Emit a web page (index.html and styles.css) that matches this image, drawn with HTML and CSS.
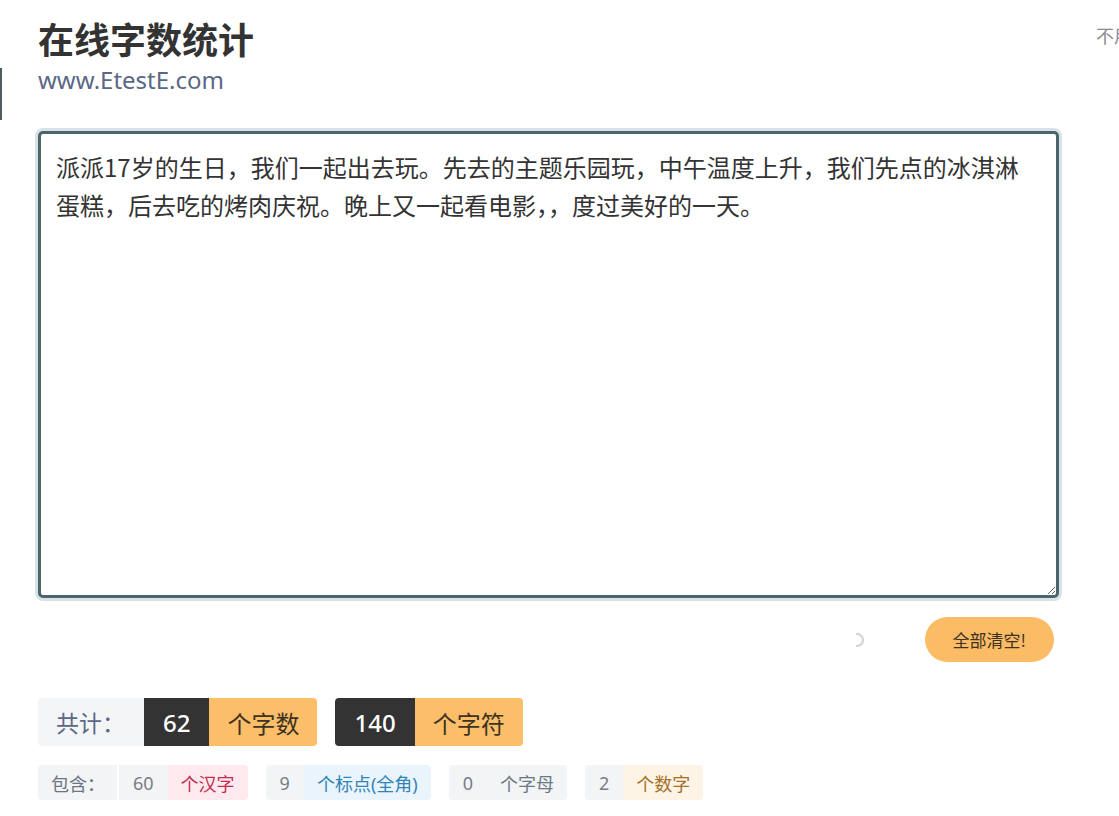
FILE: index.html
```html
<!DOCTYPE html>
<html lang="zh-CN">
<head>
    <meta charset="UTF-8" />
    <meta name="viewport" content="width=device-width, initial-scale=1.0" />
    <title>在线字数统计</title>
    <link rel="stylesheet" href="styles.css">
</head>
<body>
    <div class="side-edge"></div>
    <div class="top-note">不用登录，免费使用</div>

    <div class="wrapper">
        <header>
            <h1>在线字数统计</h1>
            <div class="site">www.EtestE.com</div>
        </header>

        <textarea id="input" class="input-box" spellcheck="false">派派17岁的生日，我们一起出去玩。先去的主题乐园玩，中午温度上升，我们先点的冰淇淋蛋糕，后去吃的烤肉庆祝。晚上又一起看电影，，度过美好的一天。</textarea>

        <div class="actions">
            <svg class="spinner" width="16" height="16" viewBox="0 0 16 16">
                <path d="M8 2 A6 6 0 0 1 8 14" fill="none" stroke="#d6d6d6" stroke-width="2.4" stroke-linecap="round"/>
            </svg>
            <button class="clear-btn" onclick="document.getElementById('input').value=''">全部清空!</button>
        </div>

        <!-- totals -->
        <div class="totals">
            <span class="label">共计：</span>
            <span class="pair">
                <span class="num">62</span><span class="unit">个字数</span>
            </span>
            <span class="pair">
                <span class="num">140</span><span class="unit">个字符</span>
            </span>
        </div>

        <!-- breakdown -->
        <div class="details">
            <span class="pair">
                <span class="tag label">包含：</span><span class="tag count">60</span><span class="tag kind pink">个汉字</span>
            </span>
            <span class="pair">
                <span class="tag count">9</span><span class="tag kind blue">个标点(全角)</span>
            </span>
            <span class="pair">
                <span class="tag count">0</span><span class="tag kind grey">个字母</span>
            </span>
            <span class="pair">
                <span class="tag count">2</span><span class="tag kind cream">个数字</span>
            </span>
        </div>
    </div>
</body>
</html>
```

FILE: styles.css
```css
/* Basic reset */
* {
    margin: 0;
    padding: 0;
    box-sizing: border-box;
}

body {
    font-family: "Noto Sans", "Noto Sans CJK SC", sans-serif;
    color: #333;
    background: #fff;
    overflow: hidden;
    position: relative;
    min-height: 100vh;
}

/* thin edge of the collapsed side panel */
.side-edge {
    position: absolute;
    left: 0;
    top: 68px;
    width: 2px;
    height: 52px;
    background-color: #4e5c62;
}

/* note that runs off the right edge */
.top-note {
    position: absolute;
    left: 1096px;
    top: 22px;
    font-size: 18px;
    color: #8a8a8a;
    white-space: nowrap;
}

.wrapper {
    width: 1059px;
    padding-left: 38px;
}

/* Header */
header {
    padding-top: 19px;
}

header h1 {
    font-size: 36px;
    line-height: 44px;
    font-weight: bold;
    color: #333;
}

.site {
    margin-top: 2px;
    font-size: 24px;
    line-height: 30px;
    color: #5a6885;
}

/* Text input */
.input-box {
    display: block;
    width: 100%;
    height: 467px;
    margin-top: 36px;
    padding: 14px 20px 14px 15px;
    border: 3px solid #4e646c;
    border-radius: 5px;
    box-shadow: 0 0 0 3px #d7e3e7;
    font-family: "Noto Sans CJK SC", sans-serif;
    font-size: 24px;
    line-height: 38px;
    color: #333;
    resize: both;
    outline: none;
}

.actions {
    display: flex;
    justify-content: flex-end;
    align-items: center;
    margin-top: 19px;
    padding-right: 5px;
}

.spinner {
    margin-right: 60px;
}

.clear-btn {
    height: 45px;
    padding: 0 28px;
    border: none;
    border-radius: 23px;
    background-color: #fcbc66;
    font-family: "Noto Sans CJK SC", sans-serif;
    font-size: 17px;
    color: #3d3120;
    cursor: pointer;
}

/* Totals row */
.totals {
    display: flex;
    align-items: stretch;
    margin-top: 36px;
    height: 48px;
    font-size: 23px;
}

.totals .label {
    display: flex;
    align-items: center;
    padding: 0 19px 0 18px;
    background-color: #f4f5f7;
    color: #5a6885;
    border-radius: 4px 0 0 4px;
}

.totals .pair {
    display: flex;
    margin-right: 18px;
}

.totals .num {
    display: flex;
    align-items: center;
    padding: 0 19px;
    background-color: #333;
    color: #fff;
    font-size: 24px;
    font-weight: 500;
    border-radius: 4px 0 0 4px;
}

.totals .unit {
    display: flex;
    align-items: center;
    padding: 0 18px;
    background-color: #fdbe6a;
    color: #3c3222;
    font-size: 24px;
    border-radius: 0 4px 4px 0;
}

.totals .label + .pair .num {
    border-radius: 0;
}

/* Breakdown row */
.details {
    display: flex;
    margin-top: 19px;
    height: 35px;
    font-size: 18px;
}

.details .pair {
    display: flex;
    margin-right: 18px;
}

.details .tag {
    display: flex;
    align-items: center;
    padding: 0 13px;
    background-color: #f3f4f6;
    color: #6c7580;
}

.details .tag:first-child {
    border-radius: 4px 0 0 4px;
}

.details .tag:last-child {
    border-radius: 0 4px 4px 0;
}

.details .label {
    padding: 0 12px 0 13px;
    margin-right: 2px;
}

.details .count {
    padding: 0 14px;
    color: #777d85;
}

.details .pink {
    background-color: #fde9ee;
    color: #c42d52;
}

.details .blue {
    background-color: #e9f4fc;
    color: #3384b6;
}

.details .grey {
    background-color: #f3f4f6;
    color: #6a7a82;
}

.details .cream {
    background-color: #fef4e5;
    color: #a4712a;
}
```
